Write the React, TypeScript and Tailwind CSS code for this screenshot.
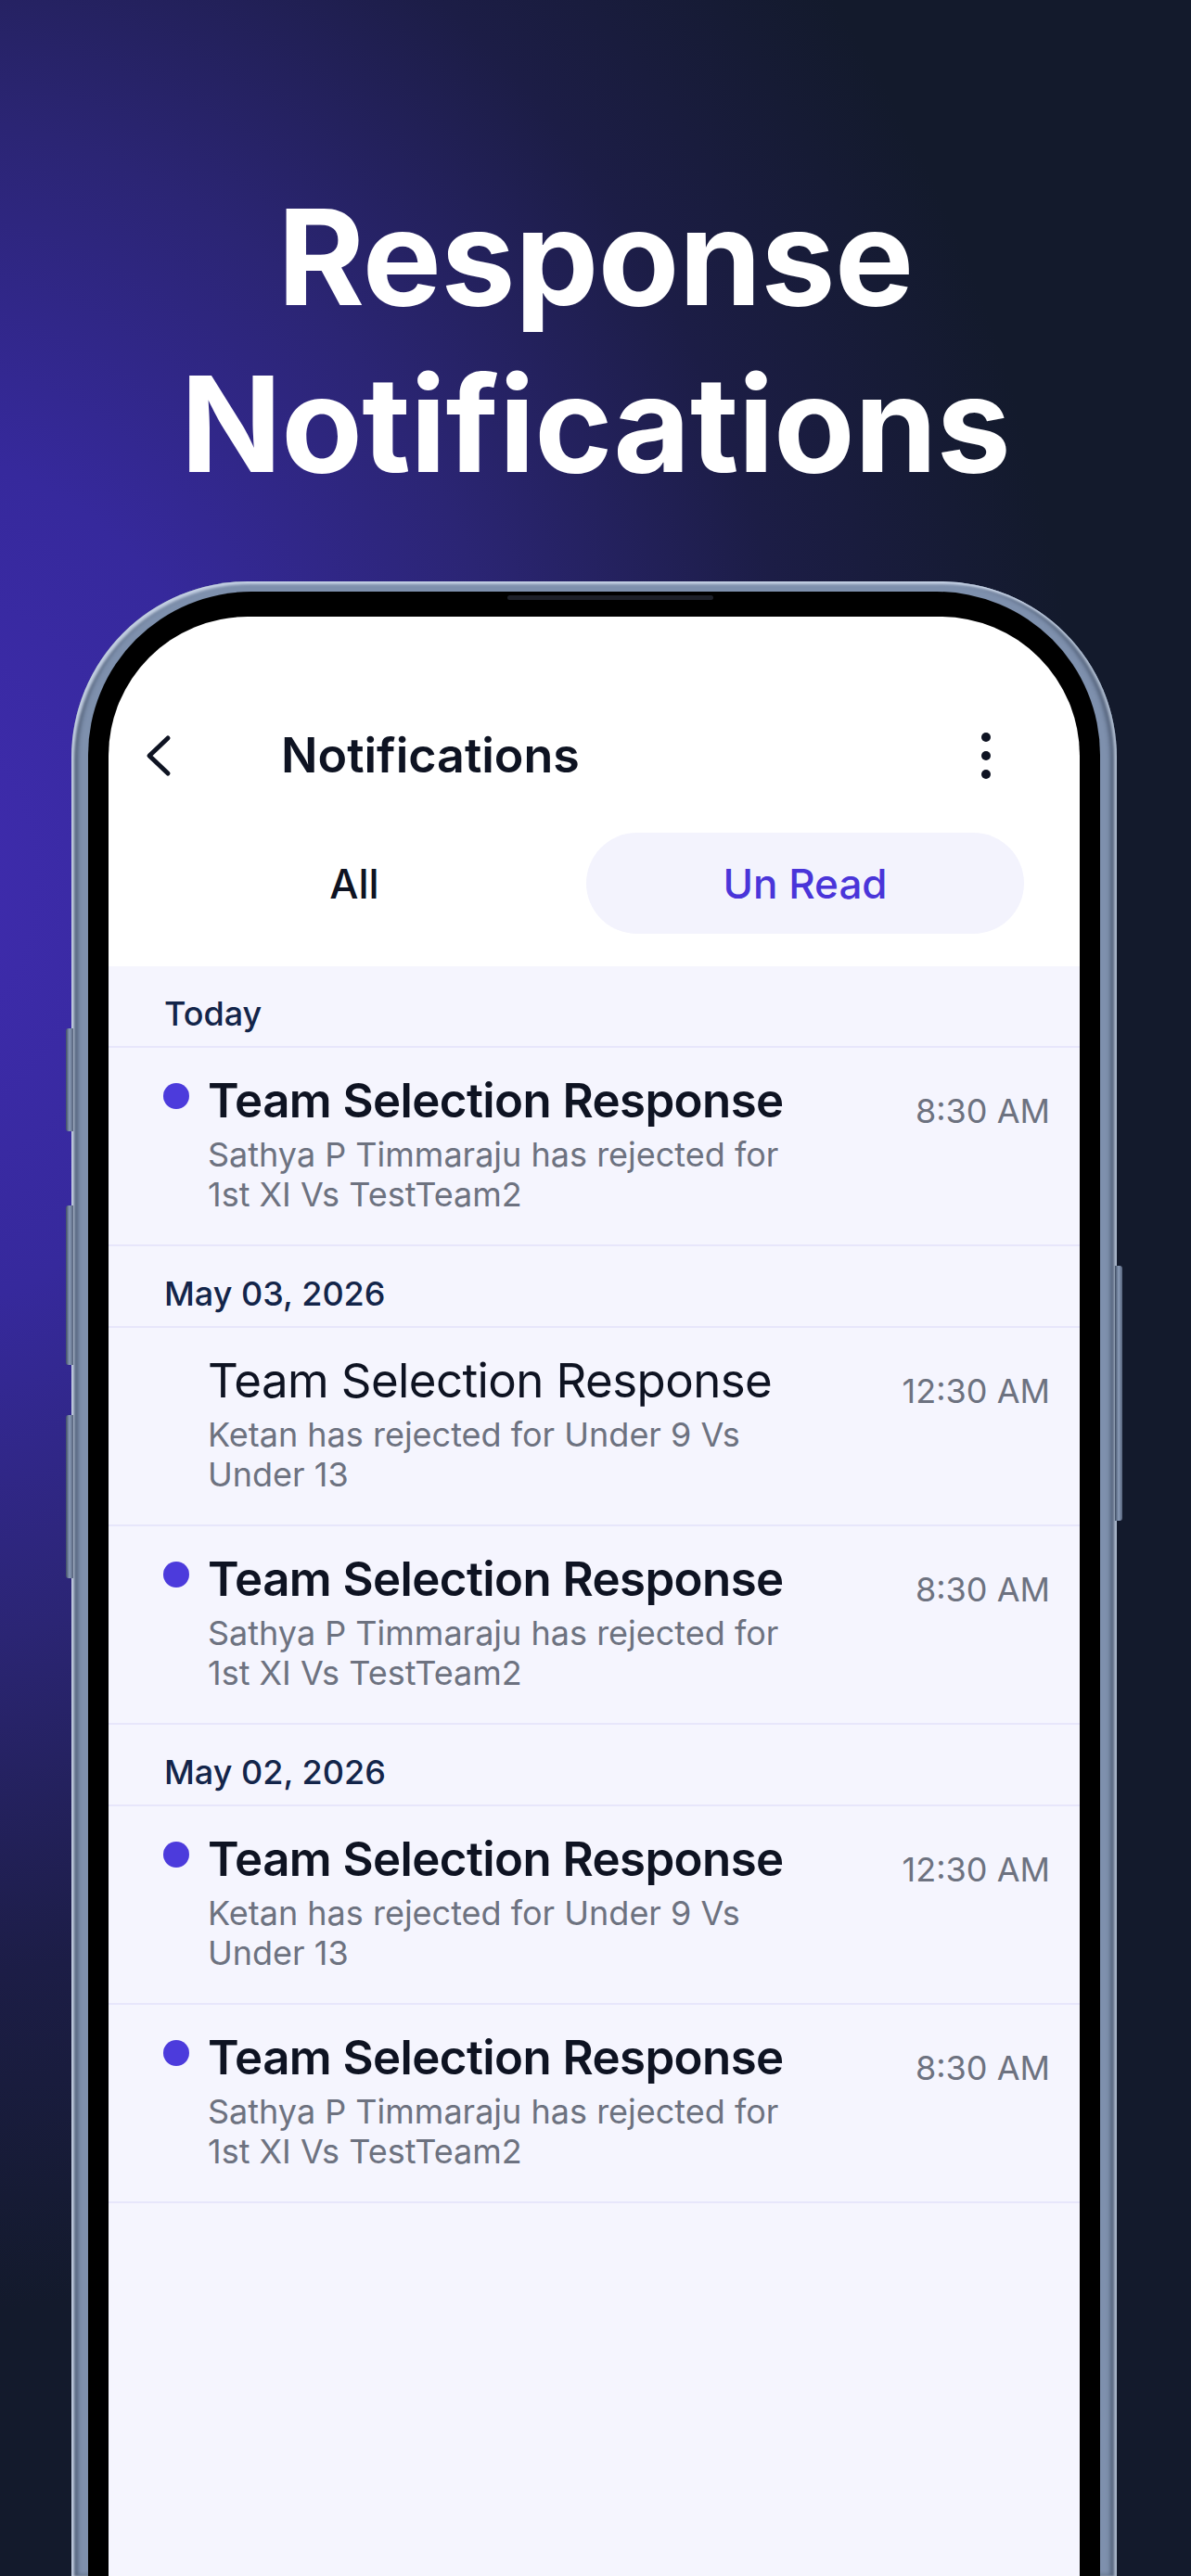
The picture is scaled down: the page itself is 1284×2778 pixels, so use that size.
import React from 'react';

type Item = { title: string; lines: string[]; time: string; unread: boolean };
type Section = { label: string; items: Item[] };

const sathya = ['Sathya P Timmaraju has rejected for', '1st XI Vs TestTeam2'];
const ketan = ['Ketan has rejected for Under 9 Vs', 'Under 13'];
const title = 'Team Selection Response';

const sections: Section[] = [
  { label: 'Today', items: [{ title, lines: sathya, time: '8:30 AM', unread: true }] },
  {
    label: 'May 03, 2026',
    items: [
      { title, lines: ketan, time: '12:30 AM', unread: false },
      { title, lines: sathya, time: '8:30 AM', unread: true },
    ],
  },
  {
    label: 'May 02, 2026',
    items: [
      { title, lines: ketan, time: '12:30 AM', unread: true },
      { title, lines: sathya, time: '8:30 AM', unread: true },
    ],
  },
];

const font = { fontFamily: 'Inter, "Noto Sans", sans-serif' };

const NotificationRow: React.FC<{ item: Item }> = ({ item }) => (
  <div className="flex h-[214px] items-start border-b-2 border-[#e7e6fb] pt-[27px] pr-[32px]">
    <div className="ml-[59px] mr-[20px] w-[28px] shrink-0">
      {item.unread && <div className="mt-[11px] h-[28px] w-[28px] rounded-full bg-[#4c3bdc]" />}
    </div>
    <div className="flex-1">
      <div
        className={`text-[51px] leading-[60px] tracking-[-0.6px] text-[#0e1322] ${item.unread ? 'font-semibold' : 'font-normal'}`}
      >
        {item.title}
      </div>
      <div className="mt-[7px] text-[36px] leading-[43px] text-[#6d7280]">
        {item.lines.map((l) => (
          <div key={l}>{l}</div>
        ))}
      </div>
    </div>
    <div className="mt-[20px] text-[36px] leading-[43px] text-[#6d7280]">{item.time}</div>
  </div>
);

const SideKey: React.FC<{ className: string }> = ({ className }) => (
  <div className={`absolute w-[8px] bg-[linear-gradient(90deg,#3f4c63,#8a9cb8,#55627a)] ${className}`} />
);

export default function App() {
  return (
    <div
      style={font}
      className="flex h-[2778px] w-[1284px] flex-col overflow-hidden bg-[#131a2c] bg-[radial-gradient(ellipse_1500px_1800px_at_-120px_950px,#402cb0_0%,#36299c_26%,#2b2574_46%,#1c1d46_66%,#131a2c_86%)]"
    >
      <h1 className="pt-[187px] text-center text-[143px] font-bold leading-[180px] tracking-[-0.5px] text-white">
        Response
        <br />
        Notifications
      </h1>

      {/* phone frame */}
      <div className="relative ml-[77px] mt-[80px] flex w-[1127px] flex-1 flex-col rounded-t-[190px] bg-[#7e90ad] px-[18px] pt-[11px] shadow-[inset_3px_3px_3px_rgba(214,226,244,0.85),inset_-3px_0_3px_rgba(214,226,244,0.7),inset_-7px_0_4px_rgba(40,50,70,0.5),inset_7px_0_4px_rgba(40,50,70,0.5)]">
        <SideKey className="left-[-6px] top-[482px] h-[111px] rounded-l-[3px]" />
        <SideKey className="left-[-6px] top-[673px] h-[172px] rounded-l-[3px]" />
        <SideKey className="left-[-6px] top-[899px] h-[176px] rounded-l-[3px]" />
        <SideKey className="right-[-6px] top-[738px] h-[275px] rounded-r-[3px]" />

        <div className="relative flex flex-1 flex-col rounded-t-[176px] bg-black px-[22px] pt-[27px]">
          <div className="absolute left-[452px] top-[4px] h-[5px] w-[222px] rounded-full bg-[#1d2029]" />
          <div className="flex flex-1 flex-col overflow-hidden rounded-t-[150px] bg-white">
            {/* header */}
            <div className="mt-[110px] flex h-[80px] items-center">
              <svg className="ml-[40px]" width="28" height="46" viewBox="0 0 28 46" fill="none">
                <polyline
                  points="24,4 4,23 24,42"
                  stroke="#0e1322"
                  strokeWidth="5"
                  strokeLinecap="round"
                  strokeLinejoin="round"
                />
              </svg>
              <div className="ml-[118px] text-[52px] font-semibold text-[#0e1322]">Notifications</div>
              <div className="ml-auto mr-[96px] flex flex-col items-center gap-[10px]">
                <span className="h-[10px] w-[10px] rounded-full bg-[#0e1322]" />
                <span className="h-[10px] w-[10px] rounded-full bg-[#0e1322]" />
                <span className="h-[10px] w-[10px] rounded-full bg-[#0e1322]" />
              </div>
            </div>

            {/* tabs */}
            <div className="ml-[29px] mt-[43px] flex gap-[14px]">
              <div className="flex h-[109px] w-[472px] items-center justify-center text-[44px] font-medium text-[#0e1322]">
                All
              </div>
              <div className="flex h-[109px] w-[472px] items-center justify-center rounded-full bg-[#f3f3fd] text-[44px] font-medium text-[#4a35d9]">
                Un Read
              </div>
            </div>

            {/* list */}
            <div className="mt-[35px] flex-1 bg-[#f5f5fe]">
              {sections.map((s) => (
                <div key={s.label}>
                  <div className="h-[88px] border-b-2 border-[#e7e6fb] pl-[60px] pt-[29px] text-[36px] font-medium leading-[44px] text-[#13254a]">
                    {s.label}
                  </div>
                  {s.items.map((it, i) => (
                    <NotificationRow key={i} item={it} />
                  ))}
                </div>
              ))}
            </div>
          </div>
        </div>
      </div>
    </div>
  );
}
